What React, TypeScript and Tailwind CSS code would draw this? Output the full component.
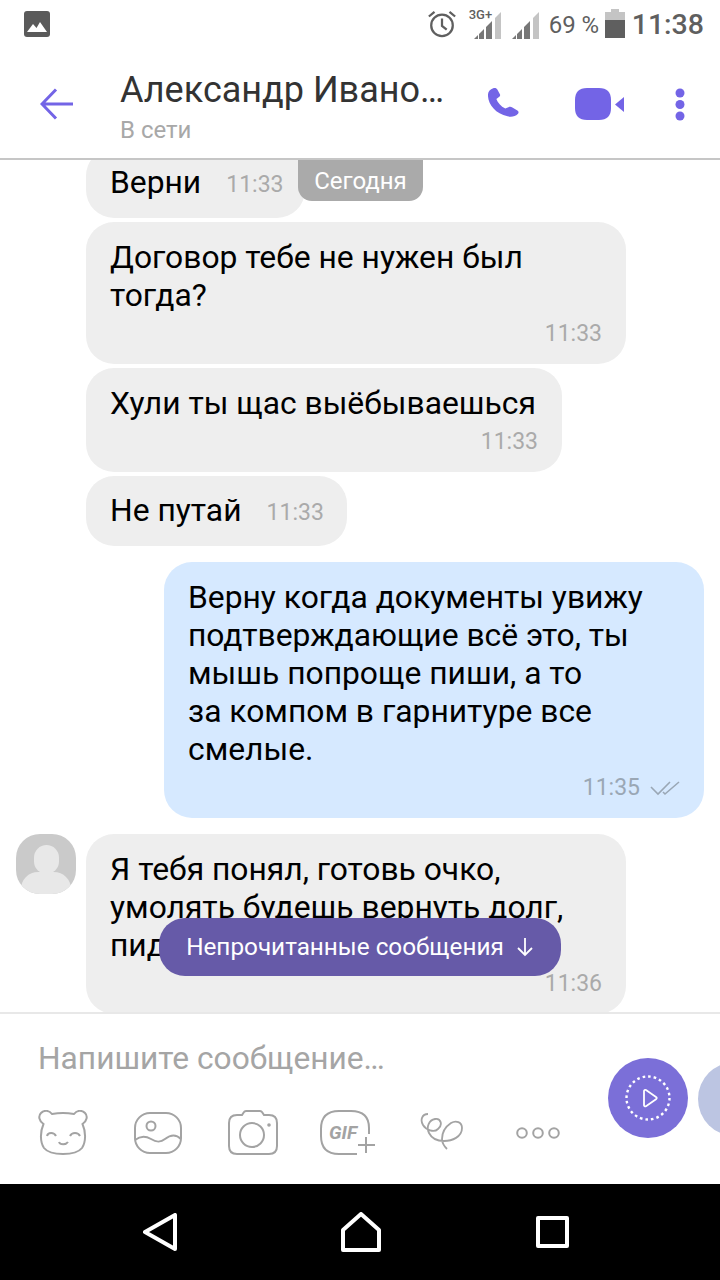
const font = "font-['Roboto',sans-serif]";

function Bubble({ children, time, className = "" }: { children?: React.ReactNode; time: string; className?: string }) {
  return (
    <div className={`rounded-[28px] bg-[#eeeeee] pl-6 pr-6 pt-4 ${className}`}>
      <p className="whitespace-nowrap text-[31.800px] leading-[38px] text-black">{children}</p>
      <p className="mt-[6px] text-right text-[23px] leading-[28px] text-[#aaaaaa]">{time}</p>
    </div>
  );
}

function InlineBubble({ text, time, className = "" }: { text: string; time: string; className?: string }) {
  return (
    <div className={`flex h-[70px] items-center gap-[25px] self-start rounded-[28px] bg-[#eeeeee] pl-6 pr-6 ${className}`}>
      <span className="whitespace-nowrap text-[31.800px] text-black">{text}</span>
      <span className="mt-[5px] text-[23px] text-[#aaaaaa]">{time}</span>
    </div>
  );
}

function Signal() {
  return (
    <svg width="27" height="27" viewBox="0 0 27 27">
      <path d="M21 27V6l6-6v27z" fill="#c4c4c4" />
      <path d="M0 27l4-4v4zM5 27v-5l5-5v10zM12 27V15l6-6v18z" fill="#777777" />
    </svg>
  );
}

function StatusBar() {
  return (
    <div className="flex h-[60px] shrink-0 items-start justify-between pl-6 pr-4 text-[#5f5f5f]">
      <svg className="mt-[11px]" width="26" height="26" viewBox="0 0 26 26">
        <rect width="26" height="26" rx="3" fill="#5a5a5a" />
        <path d="M3 21l6-8 3.500 4 3.500-6 7 10z" fill="#fff" />
      </svg>
      <div className="flex items-start">
        <svg className="mt-[9px]" width="30" height="30" viewBox="0 0 32 30" fill="none" stroke="#5f5f5f" strokeWidth="2.400">
          <circle cx="16" cy="16.500" r="11.500" />
          <path d="M16 9v8l5 4M2 7l6-5M30 7l-6-5" />
        </svg>
        <div className="relative ml-3 mt-[12px] h-[27px] w-[32px]">
          <span className="absolute -top-[4px] left-0 text-[13px] font-medium leading-[14px]">3G+</span>
          <div className="absolute left-[5px] top-0">
            <Signal />
          </div>
        </div>
        <div className="ml-[11px] mt-[12px]">
          <Signal />
        </div>
        <span className="ml-[10px] mt-[8px] w-[49px] whitespace-nowrap text-[24px] leading-[34px]">69 %</span>
        <svg className="ml-[7px] mt-[9px]" width="20" height="29" viewBox="0 0 20 29">
          <path d="M6 0h8v3h6v26H0V3h6z" fill="#c4c4c4" />
          <rect y="11" width="20" height="18" fill="#5f5f5f" />
        </svg>
        <span className="ml-[7px] mt-[6px] text-[28.500px] font-medium leading-[38px]">11:38</span>
      </div>
    </div>
  );
}

function Header() {
  return (
    <div className="flex h-[100px] shrink-0 items-start border-b-2 border-[#c6c6c6]">
      <svg className="ml-10 mt-[28px]" width="33" height="32" viewBox="0 0 33 32" fill="none" stroke="#7364e6" strokeWidth="3">
        <path d="M33 16H3M16 1.500L2 16l14 14.500" />
      </svg>
      <div className="ml-[47px] mt-2 w-[330px]">
        <p className="whitespace-nowrap text-[36px] leading-[44px] text-[#333333]">Александр Ивано…</p>
        <p className="mt-1 text-[24px] leading-[28px] text-[#a8a8a8]">В сети</p>
      </div>
      <svg className="ml-[38px] mt-[28px]" width="32" height="31" viewBox="3.800 1 17.200 22.500" preserveAspectRatio="none" fill="#7364e6">
        <path d="M6.600 1.200c1-.4 1.900 0 2.300 1l1.300 3.400c.3.800.1 1.500-.5 2L8.300 8.900c.7 2.700 2.400 5.300 4.800 7l1.700-1c.7-.4 1.500-.3 2.100.2l2.700 2.300c.8.700.8 1.700.2 2.500-1.300 1.700-3.500 2.500-5.500 1.600C7.600 19.400 3.500 12.500 3.800 5.500 3.900 3.500 5 1.900 6.600 1.200z" />
      </svg>
      <svg className="ml-[55px] mt-[28px]" width="49" height="32" viewBox="0 0 49 32" fill="#7364e6">
        <path d="M12 0h12c8 0 12 4 12 12v8c0 8-4 12-12 12H12C4 32 0 28 0 20v-8C0 4 4 0 12 0z" />
        <path d="M49 9v15l-9-7.500z" />
      </svg>
      <svg className="ml-[51px] mt-[28px]" width="10" height="33" viewBox="0 0 10 33" fill="#7364e6">
        <circle cx="5" cy="5" r="4.500" />
        <circle cx="5" cy="16.500" r="4.500" />
        <circle cx="5" cy="28" r="4.500" />
      </svg>
    </div>
  );
}

function Chat() {
  return (
    <div className="relative flex min-h-0 flex-1 flex-col overflow-hidden">
      <div className="flex flex-col pl-[86px]">
        <InlineBubble text="Верни" time="11:33" className="-mt-[12px] w-[219px]" />
        <Bubble time="11:33" className="mt-1 h-[142px] w-[540px]">
          Договор тебе не нужен был
          <br />
          тогда?
        </Bubble>
        <Bubble time="11:33" className="mt-1 h-[104px] w-[476px]">
          Хули ты щас выёбываешься
        </Bubble>
        <InlineBubble text="Не путай" time="11:33" className="mt-1 w-[261px]" />
        <div className="ml-[78px] mt-4 h-[256px] w-[540px] rounded-[28px] bg-[#d6e9ff] pl-6 pr-6 pt-4">
          <p className="whitespace-nowrap text-[31.800px] leading-[38px] text-black">
            Верну когда документы увижу
            <br />
            подтверждающие всё это, ты
            <br />
            мышь попроще пиши, а то
            <br />
            за компом в гарнитуре все
            <br />
            смелые.
          </p>
          <div className="mt-[6px] flex items-center justify-end gap-[10px]">
            <span className="text-[23px] leading-[28px] text-[#9aa7b5]">11:35</span>
            <svg width="30" height="16" viewBox="0 0 30 16" fill="none" stroke="#9aa7b5" strokeWidth="1.600">
              <path d="M1 7l7 7L20 2M13 12l2 2L29 2" />
            </svg>
          </div>
        </div>
        <div className="relative mt-4 h-[180px] w-[540px] shrink-0 rounded-[28px] bg-[#eeeeee] pl-6 pr-6 pt-4">
          <div className="absolute -left-[70px] top-0 h-[60px] w-[60px] overflow-hidden rounded-[24px] bg-[#cacaca]">
            <div className="absolute left-[18px] top-[11px] h-[29px] w-[25px] rounded-full bg-[#e8e8e8]" />
            <div className="absolute left-[5px] top-[38px] h-[34px] w-[50px] rounded-full bg-[#e8e8e8]" />
          </div>
          <p className="whitespace-nowrap text-[31.800px] leading-[38px] text-black">
            Я тебя понял, готовь очко,
            <br />
            умолять будешь вернуть долг,
            <br />
            пид
          </p>
          <p className="mt-[6px] text-right text-[23px] leading-[28px] text-[#aaaaaa]">11:36</p>
        </div>
      </div>
      <div className="absolute left-[298px] top-0 flex h-[41px] w-[125px] items-center justify-center rounded-b-[14px] bg-[#aaaaaa] text-[24px] text-white">
        Сегодня
      </div>
      <div className="absolute left-[159px] top-[758px] flex h-[58px] w-[402px] items-center justify-center gap-3 rounded-[26px] bg-[#665aa8] text-[24.300px] text-white">
        Непрочитанные сообщения
        <svg width="18" height="20" viewBox="0 0 18 20" fill="none" stroke="#fff" strokeWidth="1.800">
          <path d="M9 1v17M2 11l7 7 7-7" />
        </svg>
      </div>
    </div>
  );
}

function InputBar() {
  const stroke = { fill: "none", stroke: "#a3a3a3", strokeWidth: 2 };
  return (
    <div className="flex h-[172px] shrink-0 flex-col overflow-hidden border-t-2 border-[#e8e8e8] pl-[38px]">
      <p className="mt-[27px] text-[31.700px] leading-[36px] text-[#a5a5a5]">Напишите сообщение…</p>
      <div className="relative flex items-start">
        <div className="mt-[33px] flex items-start">
          <svg width="50" height="45" viewBox="0 0 50 45" {...stroke}>
            <path d="M5.500 14C1 11 0 6 3 3c3-3 8-3 11 1 6-1 16-1 22 0 3-4 8-4 11-1 3 3 2 8-2.500 11 3.500 8 3.500 18-.5 24-4 5-10 6-19 6S10 43 6 38C2 32 2 22 5.500 14z" />
            <path d="M9 26c1-4 7-4 9 0M32 26c2-4 8-4 10 0M21 32c1 3 7 3 9 0" />
          </svg>
          <svg className="ml-[46px] mt-[2px]" width="48" height="42" viewBox="0 0 48 42" {...stroke}>
            <rect x="1" y="1" width="46" height="40" rx="15" />
            <circle cx="17" cy="14" r="4.500" />
            <path d="M1 28c5-4 11-4 16-1 5 3 9 4 14 0 5-4 11-5 16 0" />
          </svg>
          <svg className="ml-[46px]" width="50" height="45" viewBox="0 0 50 45" {...stroke}>
            <path d="M9 5h5l2-3c.5-1 1-1 2-1h14c1 0 1.500 0 2 1l2 3h5c5 0 8 3 8 8v23c0 5-3 8-8 8H9c-5 0-8-3-8-8V13c0-5 3-8 8-8z" />
            <circle cx="24" cy="25" r="12" />
            <circle cx="41" cy="15" r="1.800" fill="#a3a3a3" stroke="none" />
          </svg>
          <div className="relative ml-[42px] h-[45px] w-[56px]">
            <svg className="absolute left-0 top-0" width="56" height="45" viewBox="0 0 56 45" {...stroke}>
              <path d="M49 24v-6C49 6 43 1 31 1H19C7 1 1 7 1 19v7c0 12 6 18 18 18h18" />
              <path d="M46 27v16M38 35h17" />
            </svg>
            <span className="absolute left-[9px] top-[12px] text-[19px] font-bold italic leading-[22px] text-[#a3a3a3]">GIF</span>
          </div>
          <svg className="ml-[44px] mt-[3px]" width="44" height="38" viewBox="0 0 44 38" {...stroke} strokeWidth="1.800">
            <path d="M8 1C2 1 0 7 3 12c3 5 11 8 15 4 5-4 3-11-3-10C9 7 6 14 9 20c3 6 9 8 15 8 8 0 18-4 18-13 0-6-6-8-11-5-6 4-9 10-9 16 0 4 2 7 5 10" />
          </svg>
          <svg className="ml-[52px] mt-[17px]" width="44" height="12" viewBox="0 0 44 12" {...stroke}>
            <circle cx="6" cy="6" r="4.800" />
            <circle cx="22" cy="6" r="4.800" />
            <circle cx="38" cy="6" r="4.800" />
          </svg>
        </div>
        {/* send button overlaps the input row */}
        <div className="absolute left-[570px] -top-[19px] flex h-[80px] w-[80px] items-center justify-center rounded-full bg-[#7b6fd8]">
          <svg width="48" height="48" viewBox="0 0 48 48" fill="none" stroke="#fff">
            <circle cx="24" cy="24" r="21.500" strokeWidth="2.400" strokeDasharray="2.600 3" />
            <path d="M20 17c0-1 1-1.500 2-1l10 7c1 .7 1 1.500 0 2.200l-10 7c-1 .5-2 0-2-1z" strokeWidth="1.800" />
          </svg>
        </div>
        <div className="absolute left-[660px] -top-[15px] h-[74px] w-[74px] rounded-full bg-[#bcc5e2]" />
      </div>
    </div>
  );
}

function NavBar() {
  return (
    <div className="flex h-[96px] shrink-0 items-center bg-black">
      <svg className="ml-[143px]" width="34" height="38" viewBox="0 0 34 38" fill="none" stroke="#fff" strokeWidth="4" strokeLinejoin="round">
        <path d="M32 2v34L2 19z" />
      </svg>
      <svg className="ml-[164px]" width="40" height="40" viewBox="0 0 40 40" fill="none" stroke="#fff" strokeWidth="4" strokeLinejoin="round">
        <path d="M20 2l18 16v20H2V18z" />
      </svg>
      <div className="ml-[155px] h-[32px] w-[33px] rounded-[2px] border-4 border-white" />
    </div>
  );
}

export default function App() {
  return (
    <div className={`flex h-[1280px] w-[720px] flex-col overflow-hidden bg-white ${font}`}>
      <StatusBar />
      <Header />
      <Chat />
      <InputBar />
      <NavBar />
    </div>
  );
}
